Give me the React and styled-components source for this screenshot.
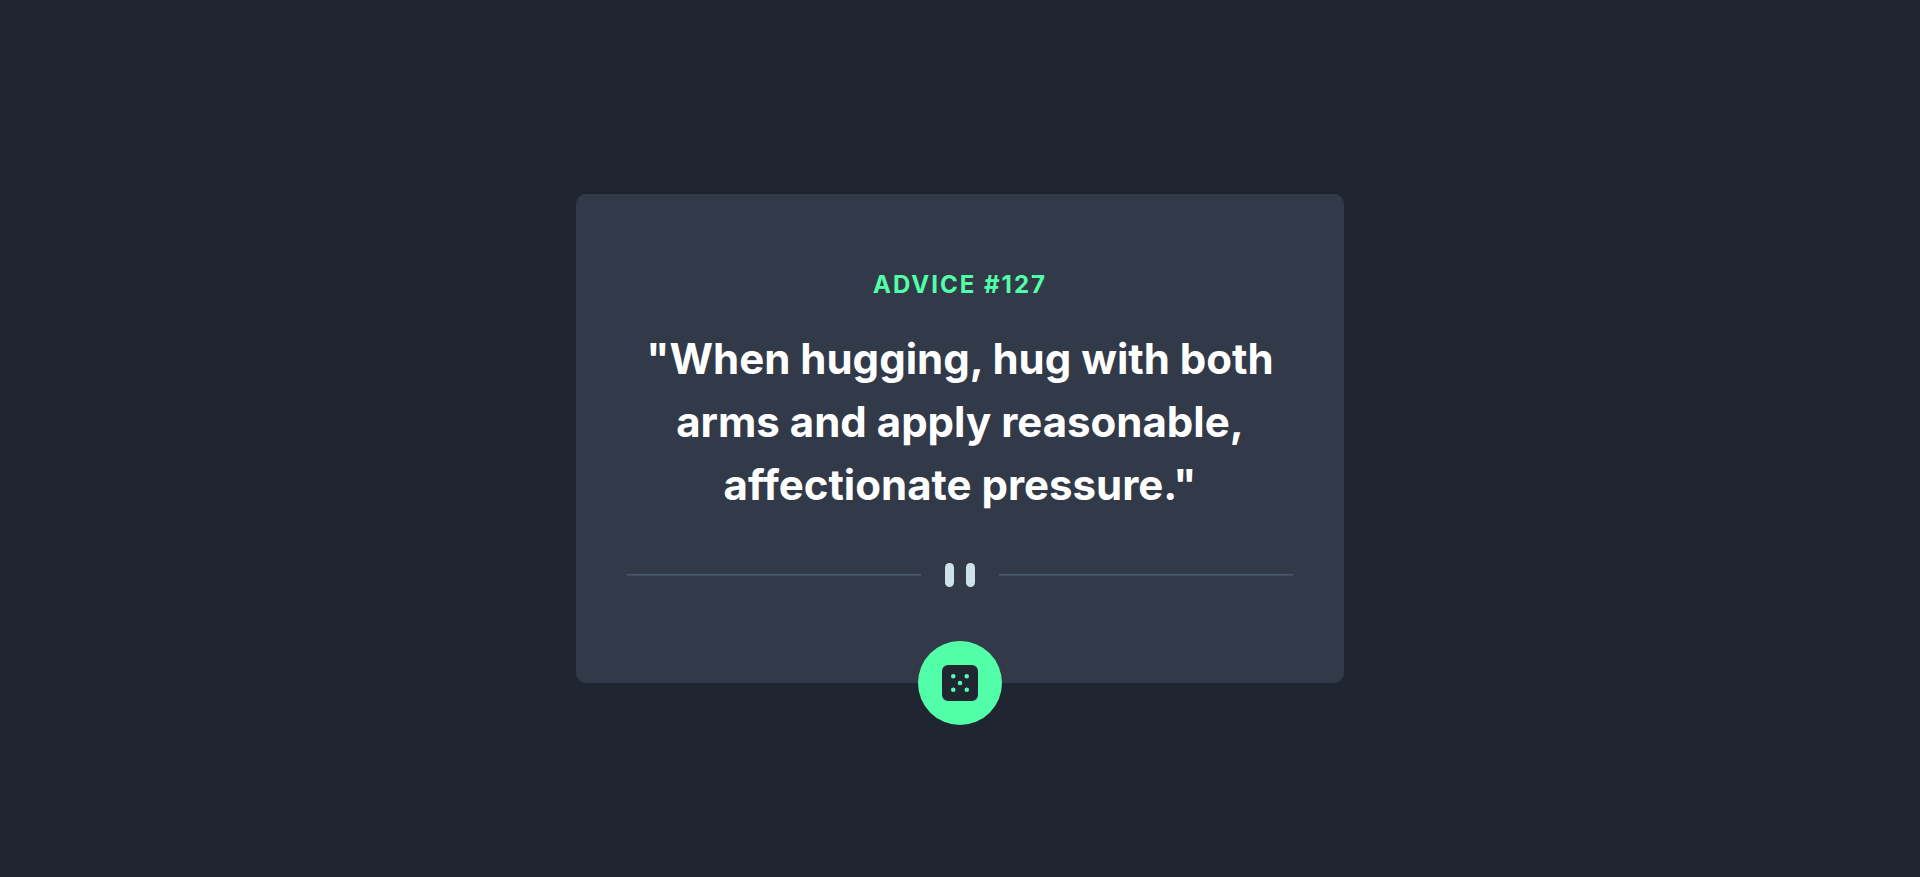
import React from "react";
import styled, { createGlobalStyle } from "styled-components";

const GlobalStyle = createGlobalStyle`
  *, *::before, *::after { box-sizing: border-box; }
  body { margin: 0; background: #1f2632; font-family: Inter, "Liberation Sans", sans-serif; }
`;

const Page = styled.main`
  display: flex;
  align-items: center;
  justify-content: center;
  min-height: 100vh;
`;

const Card = styled.article`
  display: flex;
  flex-direction: column;
  align-items: center;
  width: 40%;
  min-width: 320px;
  padding: 77px 51px 0;
  border-radius: 10px;
  background: #323a49;
  text-align: center;
`;

const Label = styled.h1`
  margin: 0;
  color: #52ffa8;
  font-size: 24px;
  font-weight: 700;
  line-height: 28px;
  letter-spacing: 2px;
`;

const Quote = styled.p`
  margin: 28px 0 0;
  color: #fff;
  font-size: 42px;
  font-weight: 700;
  line-height: 63px;
`;

const Divider = styled.div`
  display: flex;
  align-items: center;
  gap: 24px;
  width: 100%;
  margin-top: 47px;
`;

const Rule = styled.span`
  flex: 1;
  height: 2px;
  background: #4a586f;
  border-bottom: 1px solid #414c5f;
`;

const DiceButton = styled.button`
  display: grid;
  place-items: center;
  width: 84px;
  height: 84px;
  margin: 54px 0 -42px;
  padding: 0;
  border: 0;
  border-radius: 50%;
  background: #52ffa8;
  cursor: pointer;
`;

export default function App() {
  return (
    <Page>
      <GlobalStyle />
      <Card>
        <Label>ADVICE #127</Label>
        <Quote>"When hugging, hug with both arms and apply reasonable, affectionate pressure."</Quote>
        <Divider>
          <Rule />
          <svg width="30" height="24" viewBox="0 0 20 16" fill="#cee3e9" aria-hidden="true">
            <rect width="6" height="16" rx="3" />
            <rect x="14" width="6" height="16" rx="3" />
          </svg>
          <Rule />
        </Divider>
        <DiceButton type="button" aria-label="New advice">
          <svg width="36" height="36" viewBox="0 0 24 24" fill="#202733" aria-hidden="true">
            <path d="M20 0H4a4.005 4.005 0 0 0-4 4v16a4.005 4.005 0 0 0 4 4h16a4.005 4.005 0 0 0 4-4V4a4.005 4.005 0 0 0-4-4ZM7.5 18a1.5 1.5 0 1 1 0-3 1.5 1.5 0 0 1 0 3Zm0-9a1.5 1.5 0 1 1 0-3 1.5 1.5 0 0 1 0 3Zm4.5 4.5a1.5 1.5 0 1 1 0-3 1.5 1.5 0 0 1 0 3Zm4.5 4.5a1.5 1.5 0 1 1 0-3 1.5 1.5 0 0 1 0 3Zm0-9a1.5 1.5 0 1 1 0-3 1.5 1.5 0 0 1 0 3Z" />
          </svg>
        </DiceButton>
      </Card>
    </Page>
  );
}
